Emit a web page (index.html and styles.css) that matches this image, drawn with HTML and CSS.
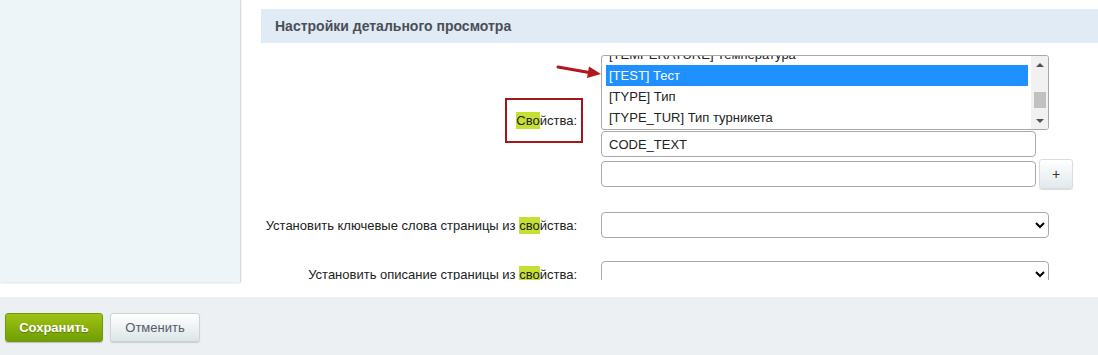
FILE: index.html
```html
<!DOCTYPE html>
<html lang="ru">
<head>
    <meta charset="UTF-8">
    <meta name="viewport" content="width=device-width, initial-scale=1.0">
    <title>Настройки детального просмотра</title>
    <link rel="stylesheet" href="styles.css">
</head>
<body>

<div class="workarea">
    <div class="sidebar"></div>

    <div class="content">
        <div class="section-title">Настройки детального просмотра</div>

        <div class="form">
            <div class="label-cell boxed-cell">
                <span class="marked-label"><mark>Сво</mark>йства:</span>
            </div>
            <div class="control-cell">
                <div class="listbox">
                    <div class="options">
                        <div class="options-inner">
                            <div class="option">[TEMPERATURE] Температура</div>
                            <div class="option selected">[TEST] Тест</div>
                            <div class="option">[TYPE] Тип</div>
                            <div class="option">[TYPE_TUR] Тип турникета</div>
                        </div>
                    </div>
                    <div class="scrollbar">
                        <div class="scroll-btn"><span class="tri up"></span></div>
                        <div class="track"><span class="thumb"></span></div>
                        <div class="scroll-btn"><span class="tri down"></span></div>
                    </div>
                </div>
                <input type="text" class="text-input" value="CODE_TEXT">
                <div class="input-row">
                    <input type="text" class="text-input">
                    <button class="btn-plus" type="button">+</button>
                </div>
            </div>

            <div class="label-cell"><span>Установить ключевые слова страницы из <mark>сво</mark>йства:</span></div>
            <div class="control-cell">
                <select class="select"><option></option></select>
            </div>

            <div class="label-cell"><span>Установить описание страницы из <mark>сво</mark>йства:</span></div>
            <div class="control-cell">
                <select class="select"><option></option></select>
            </div>
        </div>

        <!-- стрелка-указатель -->
        <svg class="pointer" width="50" height="16" viewBox="0 0 50 16">
            <line x1="2" y1="3" x2="36" y2="9" stroke="#b0181d" stroke-width="3" stroke-linecap="round"/>
            <polygon points="33,2.5 45,10 31,14" fill="#b0181d"/>
        </svg>
    </div>
</div>

<div class="footer">
    <button class="btn btn-save" type="button">Сохранить</button>
    <button class="btn btn-cancel" type="button">Отменить</button>
</div>

</body>
</html>
```

FILE: styles.css
```css
body {
    margin: 0;
    font-family: "Liberation Sans", Arial, sans-serif;
    font-size: 13px;
    color: #222;
    background-color: #fff;
}
.workarea {
    display: flex;
    height: 297px;
}
.sidebar {
    width: 240px;
    height: 282px;
    background-color: #eef5f9;
    border-right: 1px solid #d3dce1;
    box-shadow: 0 1px 2px rgba(0, 0, 0, 0.12);
    flex-shrink: 0;
}
.content {
    position: relative;
    flex: 1;
    height: 280px;
    overflow: hidden;
    padding-left: 20px;
}
.section-title {
    margin-top: 9px;
    height: 34px;
    line-height: 34px;
    padding-left: 14px;
    background-color: #e0ebf5;
    font-size: 14px;
    font-weight: bold;
    color: #4b4f55;
}
.form {
    display: grid;
    grid-template-columns: 340px 1fr;
    row-gap: 23px;
    margin-top: 12px;
}
.label-cell {
    display: flex;
    align-items: center;
    justify-content: flex-end;
    padding-right: 24px;
    text-align: right;
}
.boxed-cell {
    padding-right: 18px;
    padding-bottom: 4px;
}
.marked-label {
    display: inline-block;
    border: 2px solid #a3161a;
    padding: 13px 4px 13px 9px;
    line-height: 15px;
}
mark {
    background-color: #c6df33;
    color: inherit;
    padding: 1px 0;
}
.control-cell {
    display: flex;
    flex-direction: column;
}
.listbox {
    display: flex;
    width: 448px;
    height: 75px;
    box-sizing: border-box;
    border: 1px solid #a9a9a9;
    border-radius: 3px;
    background-color: #fff;
    overflow: hidden;
}
.options {
    flex: 1;
    overflow: hidden;
    padding: 0 3px 0 4px;
}
.options-inner {
    margin-top: -12px;
}
.option {
    height: 21px;
    line-height: 21px;
    padding-left: 3px;
    white-space: nowrap;
}
.option.selected {
    background-color: #1e90ff;
    color: #fff;
}
.scrollbar {
    width: 17px;
    display: flex;
    flex-direction: column;
    background-color: #f1f1f1;
}
.scroll-btn {
    height: 17px;
    display: flex;
    align-items: center;
    justify-content: center;
}
.tri {
    width: 0;
    height: 0;
    border-left: 4px solid transparent;
    border-right: 4px solid transparent;
}
.tri.up {
    border-bottom: 4px solid #505050;
}
.tri.down {
    border-top: 4px solid #505050;
}
.track {
    flex: 1;
}
.thumb {
    display: block;
    width: 12px;
    height: 16px;
    margin: 19px auto 0;
    background-color: #c1c1c1;
}
.text-input {
    width: 435px;
    height: 26px;
    box-sizing: border-box;
    margin: 1px 0 0;
    padding: 0 7px;
    border: 1px solid #a9a9a9;
    border-radius: 4px;
    font-family: inherit;
    font-size: 13px;
    line-height: 24px;
    color: #222;
}
.input-row {
    display: flex;
    align-items: flex-start;
    margin-top: 3px;
}
.input-row .text-input {
    margin-top: 1px;
}
.btn-plus {
    width: 34px;
    height: 30px;
    margin-left: 3px;
    margin-top: -1px;
    border: 1px solid #d7dde0;
    border-radius: 3px;
    background: linear-gradient(#fff, #e2e9ec);
    box-shadow: 0 1px 1px rgba(0, 0, 0, 0.15);
    font-family: inherit;
    font-size: 14px;
    color: #333;
    padding: 0;
}
.select {
    width: 448px;
    height: 26px;
    border: 1px solid #a9a9a9;
    border-radius: 4px;
    background-color: #fff;
    font-family: inherit;
    font-size: 13px;
}
.pointer {
    position: absolute;
    left: 315px;
    top: 64px;
}
.footer {
    height: 58px;
    box-sizing: border-box;
    padding: 16px 0 0 5px;
    background-color: #ecf0f2;
    display: flex;
    align-items: flex-start;
    gap: 7px;
}
.btn {
    height: 29px;
    border-radius: 3px;
    font-family: inherit;
    font-size: 13px;
    padding: 0;
    cursor: pointer;
}
.btn-save {
    width: 98px;
    border: 1px solid #6f9a07;
    background: linear-gradient(#a0c214, #6f9e05);
    color: #fff;
    font-weight: bold;
    text-shadow: 0 1px 1px rgba(0, 0, 0, 0.3);
    box-shadow: 0 1px 1px rgba(0, 0, 0, 0.2);
}
.btn-cancel {
    width: 90px;
    border: 1px solid #cdd3d6;
    background: linear-gradient(#fff, #dde5e8);
    color: #535c69;
    box-shadow: 0 1px 1px rgba(0, 0, 0, 0.15);
}
```
